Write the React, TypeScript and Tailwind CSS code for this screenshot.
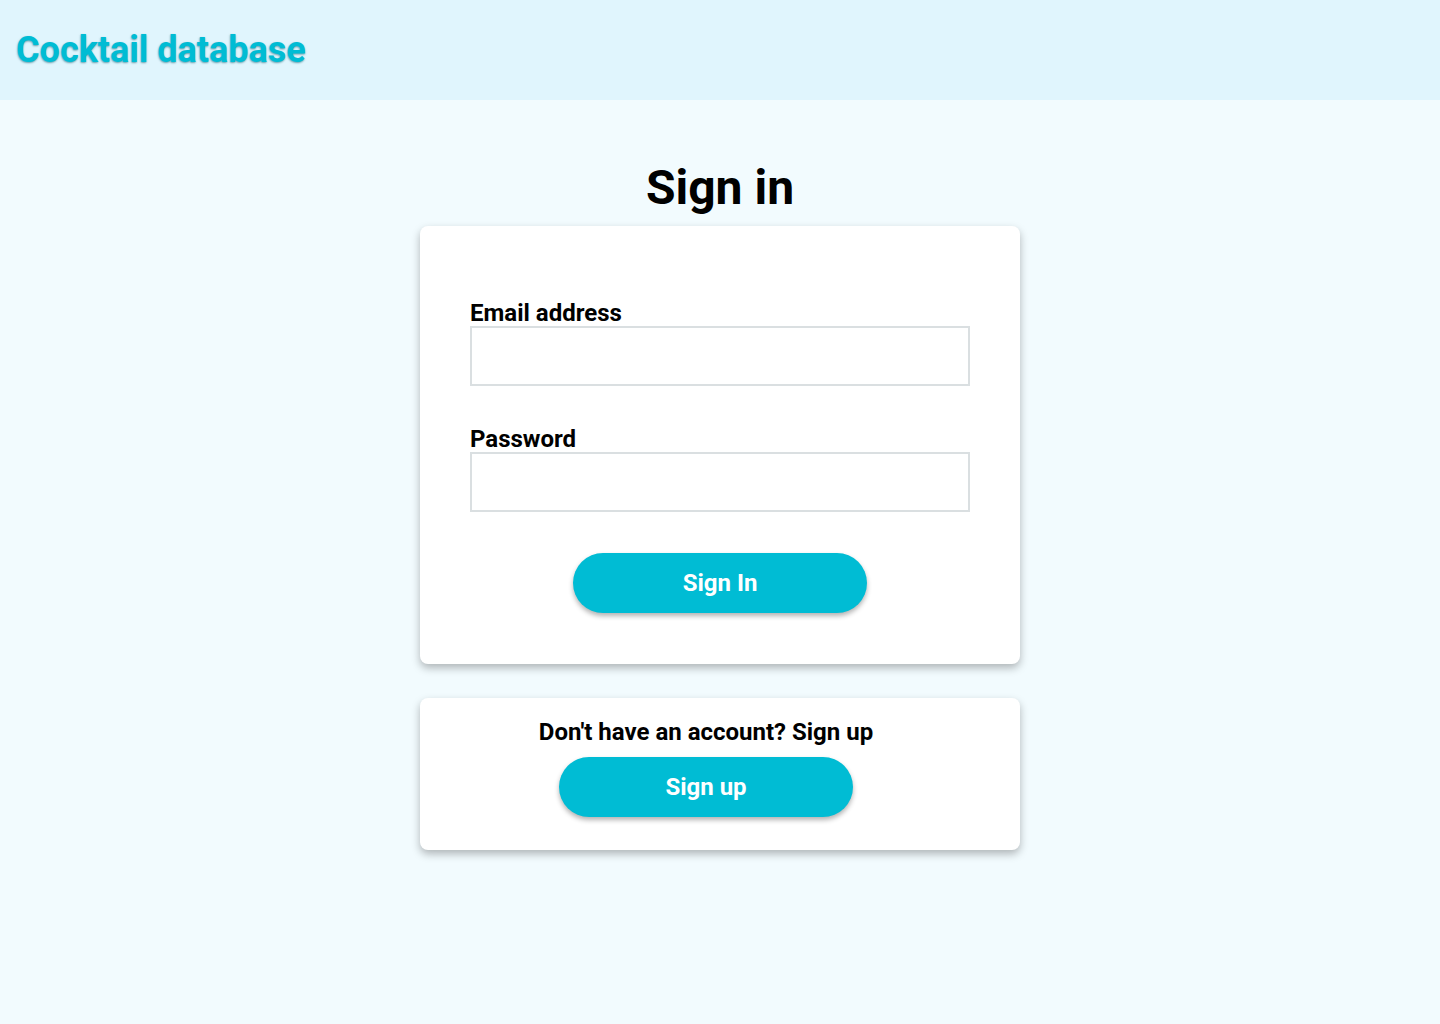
import React from 'react';

const Field = ({ label, type, className }: { label: string; type: string; className?: string }) => (
  <label className={`flex flex-col ${className ?? ''}`}>
    <span className="text-[24px] leading-[26px] font-bold text-black">{label}</span>
    <input
      type={type}
      className="h-[60px] w-full border-2 border-[#dadfe1] bg-white px-3 text-lg outline-none"
    />
  </label>
);

const App = () => {
  return (
    <div className="min-h-screen bg-[#f2fbfe] font-['Roboto',sans-serif]">
      <header className="flex h-[100px] items-center bg-[#e0f5fd] px-4">
        <h1 className="text-[36px] font-bold text-[#00bcd4] [text-shadow:0_1px_2px_rgba(0,90,110,0.55)]">
          Cocktail database
        </h1>
      </header>

      <main className="flex flex-col items-center pt-[56px]">
        <h2 className="text-[48px] font-bold leading-[64px] text-black">Sign in</h2>

        <div className="mt-[6px] w-[600px] rounded-lg bg-white px-[50px] pt-[74px] pb-[51px] shadow-[0_4px_8px_rgba(0,0,0,0.28)]">
          <Field label="Email address" type="email" />
          <Field label="Password" type="password" className="mt-[40px]" />
          <div className="mt-[41px] flex justify-center">
            <button className="h-[60px] w-[294px] rounded-[30px] bg-[#00bcd4] text-[24px] font-bold text-white shadow-[0_3px_5px_rgba(0,0,0,0.3)]">
              Sign In
            </button>
          </div>
        </div>

        <div className="mt-[34px] flex w-[600px] flex-col items-center rounded-lg bg-white pt-[20px] pr-[28px] pb-[33px] shadow-[0_4px_8px_rgba(0,0,0,0.28)]">
          <p className="text-[24px] leading-[28px] font-bold text-black">Don't have an account? Sign up</p>
          <button className="mt-[11px] h-[60px] w-[294px] rounded-[30px] bg-[#00bcd4] text-[24px] font-bold text-white shadow-[0_3px_5px_rgba(0,0,0,0.3)]">
            Sign up
          </button>
        </div>
      </main>
    </div>
  );
};

export default App;
